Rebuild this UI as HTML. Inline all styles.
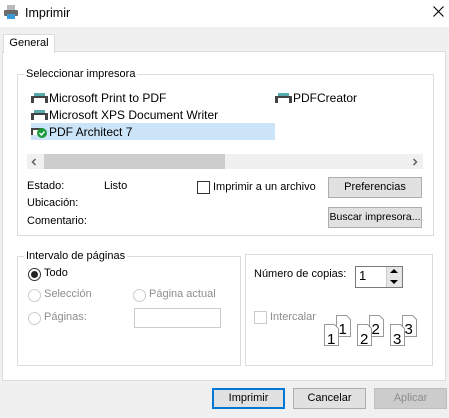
<!DOCTYPE html>
<html><head><meta charset="utf-8"><style>
*{margin:0;padding:0;box-sizing:border-box}
body{width:449px;height:418px;background:#f0f0f0;font-family:"Liberation Sans",sans-serif;font-size:11px;color:#000;position:relative;overflow:hidden}
.a{position:absolute;white-space:nowrap}
.box{position:absolute;border:1px solid #dcdcdc}
.lbl{position:absolute;background:#fff;padding:0 2px;line-height:14px}
.btn{position:absolute;background:#e1e1e1;border:1px solid #adadad;text-align:center;line-height:19px;white-space:nowrap}
.rad{position:absolute;width:13px;height:13px;border:1px solid #ccc;border-radius:50%;background:#fff}
.dis{color:#8d8d8d}
.pt{font-size:12px;line-height:16px}
</style></head><body>
<div class="a" style="left:0;top:0;width:449px;height:27px;background:#fff"></div>
<svg class="a" style="left:4px;top:5px" width="14" height="14" viewBox="0 0 14 14"><rect x="3" y="0" width="8" height="5" fill="#bbb"/><rect x="0" y="5" width="14" height="6" rx="1" fill="#6a6a6a"/><rect x="3" y="9" width="8" height="5" fill="#3a9ad9"/></svg>
<div class="a" style="left:25px;top:5px;font-size:12.5px;line-height:16px">Imprimir</div>
<svg class="a" style="left:433px;top:6px" width="11" height="11"><path d="M0.5 0.5L10.5 10.5M10.5 0.5L0.5 10.5" stroke="#000" stroke-width="1.1"/></svg>

<div class="a" style="left:2px;top:51px;width:444px;height:330px;background:#fff;border:1px solid #dcdcdc"></div>
<div class="a" style="left:3px;top:34px;width:52px;height:19px;background:#fff;border:1px solid #dcdcdc;border-bottom:none;text-align:center;line-height:17px">General</div>

<div class="box" style="left:17px;top:74px;width:417px;height:162px"></div>
<div class="lbl" style="left:24px;top:67px">Seleccionar impresora</div>

<div class="a" style="left:31px;top:123px;width:244px;height:17px;background:#cce4f7"></div>
<svg class="a" style="left:31px;top:93px" width="17" height="11"><rect x="3" y="0" width="11" height="3" fill="#5aa"/><rect x="0" y="3" width="17" height="7" fill="#444"/><rect x="3" y="5" width="11" height="5" fill="#fff"/></svg>
<div class="a pt" style="left:49px;top:90px">Microsoft Print to PDF</div>
<svg class="a" style="left:31px;top:110px" width="17" height="11"><rect x="3" y="0" width="11" height="3" fill="#5aa"/><rect x="0" y="3" width="17" height="7" fill="#444"/><rect x="3" y="5" width="11" height="5" fill="#fff"/></svg>
<div class="a pt" style="left:49px;top:107px">Microsoft XPS Document Writer</div>
<svg class="a" style="left:31px;top:126px" width="17" height="12"><rect x="0" y="2" width="12" height="7" fill="#444"/><rect x="2" y="4" width="8" height="5" fill="#fff"/><circle cx="11" cy="7" r="5" fill="#1a9a3a"/><path d="M8.5 7l2 2 3-3.5" stroke="#fff" stroke-width="1.4" fill="none"/></svg>
<div class="a pt" style="left:49px;top:124px">PDF Architect 7</div>
<svg class="a" style="left:275px;top:93px" width="17" height="11"><rect x="3" y="0" width="11" height="3" fill="#5aa"/><rect x="0" y="3" width="17" height="7" fill="#444"/><rect x="3" y="5" width="11" height="5" fill="#fff"/></svg>
<div class="a pt" style="left:293px;top:90px">PDFCreator</div>

<div class="a" style="left:27px;top:154px;width:396px;height:15px;background:#f0f0f0"></div>
<div class="a" style="left:44px;top:154px;width:181px;height:15px;background:#cdcdcd"></div>
<svg class="a" style="left:31px;top:158px" width="6" height="8"><path d="M4.5 1L1.5 4l3 3" stroke="#606060" stroke-width="1.5" fill="none"/></svg>
<svg class="a" style="left:412px;top:158px" width="6" height="8"><path d="M1.5 1l3 3-3 3" stroke="#606060" stroke-width="1.5" fill="none"/></svg>

<div class="a" style="left:27px;top:180px">Estado:</div>
<div class="a" style="left:104px;top:180px">Listo</div>
<div class="a" style="left:27px;top:197px">Ubicación:</div>
<div class="a" style="left:27px;top:215px">Comentario:</div>
<div class="a" style="left:197px;top:181px;width:13px;height:13px;border:1px solid #333;background:#fff"></div>
<div class="a" style="left:213px;top:181px">Imprimir a un archivo</div>
<div class="btn" style="left:328px;top:177px;width:94px;height:21px">Preferencias</div>
<div class="btn" style="left:328px;top:207px;width:94px;height:21px;font-size:10.5px">Buscar impresora...</div>

<div class="box" style="left:17px;top:256px;width:224px;height:110px"></div>
<div class="lbl" style="left:24px;top:249px">Intervalo de páginas</div>
<div class="rad" style="left:28px;top:268px;border-color:#333"><div class="a" style="left:2px;top:2px;width:7px;height:7px;border-radius:50%;background:#222"></div></div>
<div class="a" style="left:44px;top:267px">Todo</div>
<div class="rad" style="left:28px;top:289px"></div><div class="a dis" style="left:44px;top:288px">Selección</div>
<div class="rad" style="left:133px;top:289px"></div><div class="a dis" style="left:149px;top:288px">Página actual</div>
<div class="rad" style="left:28px;top:312px"></div><div class="a dis" style="left:44px;top:311px">Páginas:</div>
<div class="a" style="left:134px;top:308px;width:87px;height:20px;border:1px solid #ccc;background:#fff"></div>

<div class="box" style="left:245px;top:254px;width:188px;height:112px"></div>
<div class="a" style="left:254px;top:268px">Número de copias:</div>
<div class="a" style="left:355px;top:266px;width:48px;height:22px;border:1px solid #7a7a7a;background:#fff"></div>
<div class="a" style="left:359px;top:268px;font-size:13px">1</div>
<div class="a" style="left:386px;top:267px;width:16px;height:20px;background:#e6e6e6;border-left:1px solid #ccc"></div>
<div class="a" style="left:390px;top:269px;width:0;height:0;border:4px solid transparent;border-bottom:4px solid #000;border-top:none"></div>
<div class="a" style="left:390px;top:280px;width:0;height:0;border:4px solid transparent;border-top:4px solid #000;border-bottom:none"></div>
<div class="a" style="left:254px;top:311px;width:13px;height:13px;border:1px solid #ccc;background:#fff"></div>
<div class="a dis" style="left:270px;top:311px">Intercalar</div>
<svg class="a" style="left:323px;top:314px" width="100" height="35" font-family="Liberation Sans" font-size="15">
<g><path d="M13.5 1.5h10l4 4v17h-14z" fill="#fff" stroke="#999"/><path d="M1.5 10.5h10l4 4v17h-14z" fill="#fff" stroke="#999"/><text x="15.5" y="20">1</text><text x="4" y="30">1</text></g>
<g transform="translate(33,0)"><path d="M13.5 1.5h10l4 4v17h-14z" fill="#fff" stroke="#999"/><path d="M1.5 10.5h10l4 4v17h-14z" fill="#fff" stroke="#999"/><text x="15.5" y="20">2</text><text x="4" y="30">2</text></g>
<g transform="translate(66,0)"><path d="M13.5 1.5h10l4 4v17h-14z" fill="#fff" stroke="#999"/><path d="M1.5 10.5h10l4 4v17h-14z" fill="#fff" stroke="#999"/><text x="15.5" y="20">3</text><text x="4" y="30">3</text></g>
</svg>

<div class="btn" style="left:212px;top:388px;width:73px;height:21px;border:2px solid #0078d7;line-height:17px">Imprimir</div>
<div class="btn" style="left:293px;top:388px;width:73px;height:21px">Cancelar</div>
<div class="btn dis" style="left:374px;top:388px;width:73px;height:21px;background:#ccc;border-color:#bfbfbf">Aplicar</div>
</body></html>
